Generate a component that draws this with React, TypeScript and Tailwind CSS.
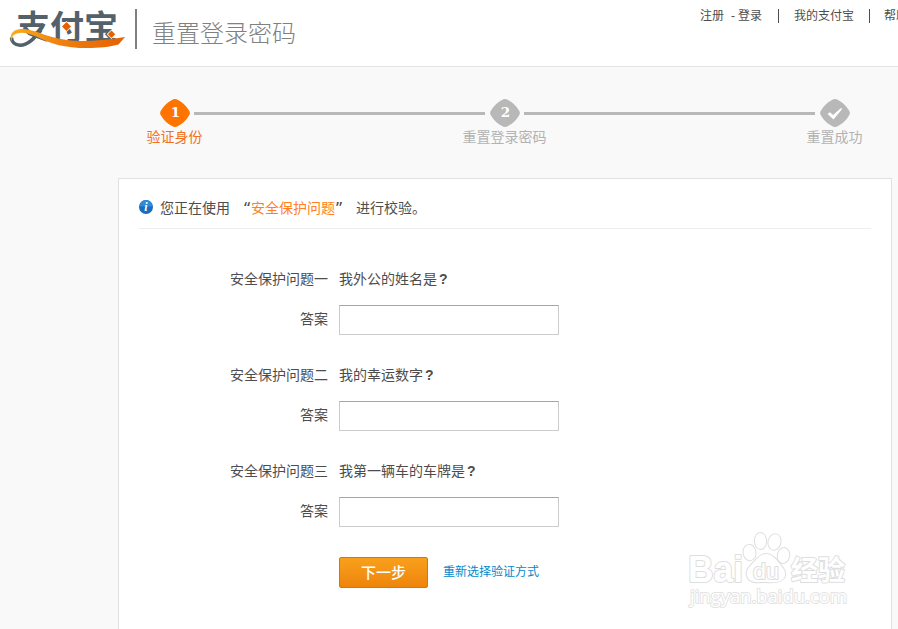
import type { ReactNode } from "react";

interface Question {
  label: string;
  text: string;
}

const questions: Question[] = [
  { label: "安全保护问题一", text: "我外公的姓名是" },
  { label: "安全保护问题二", text: "我的幸运数字" },
  { label: "安全保护问题三", text: "我第一辆车的车牌是" },
];

function Logo() {
  return (
    <svg width="118" height="44" viewBox="8 7 118 44" className="shrink-0 overflow-visible">
      <defs>
        <linearGradient id="swoosh" x1="0" x2="1">
          <stop offset="0" stopColor="#fbac1c" />
          <stop offset="0.45" stopColor="#ee8010" />
          <stop offset="1" stopColor="#e66000" />
        </linearGradient>
      </defs>
      <text
        x="16"
        y="38.500"
        textLength="102"
        lengthAdjust="spacingAndGlyphs"
        fill="#52616a"
        fontSize="33"
        fontWeight="700"
        fontFamily="'Noto Sans CJK SC', sans-serif"
      >
        支付宝
      </text>
      {/* covers the glyph feet where the ribbon passes under them */}
      <path d="M8 36L22 33C38 38 48 43 60 45L60 50L8 50Z" fill="#fff" />
      <path d="M41 30C35 37 29 45 20 45.300C14.500 45 11.500 41.500 11.500 37.500" fill="none" stroke="#52616a" strokeWidth="3.600" />
      <path
        d="M12 41.500C8.500 36 12 29.300 21 29C38 29 47 40 80 41C98 41 112 39 125 37L118.500 44.500C103 48.800 76 49.500 58 45C42 41 34 33.500 22 32.800C14 32.800 11 36.500 12 41.500Z"
        fill="url(#swoosh)"
      />
      <g fill="#e66000" stroke="#fff" strokeWidth="1.500" paintOrder="stroke">
        <path d="M66.500 22l4.500 4.500l-4.500 4.500l-4.500-4.500z" />
        <path d="M111.500 30.500l3.700 3.700l-3.700 3.700l-3.700-3.700z" />
      </g>
    </svg>
  );
}

function Step({ label, active, children }: { label: string; active?: boolean; children: ReactNode }) {
  return (
    <div className="flex w-[30px] shrink-0 flex-col items-center">
      <svg width="30" height="28" viewBox="0 0 30 28">
        <path
          d="M12 1Q15-.8 18 1Q25 4.500 29 11.500Q30.800 14 29 16.500Q25 23.500 18 27Q15 28.800 12 27Q5 23.500 1 16.500Q-.8 14 1 11.500Q5 4.500 12 1Z"
          fill={active ? "#ff7300" : "#b8b8b8"}
        />
        {children}
      </svg>
      <span
        className={`mr-px text-[14px] leading-[20px] whitespace-nowrap ${active ? "text-[#f37021]" : "text-[#b2b2b2]"}`}
      >
        {label}
      </span>
    </div>
  );
}

function StepNumber({ value }: { value: number }) {
  return (
    <text x="15.500" y="18" textAnchor="middle" fill="#fff" fontSize="13.500" fontWeight="700" fontFamily="'DejaVu Serif', serif">
      {value}
    </text>
  );
}

function StepLine() {
  return <div className="mt-[13px] mr-[5px] ml-1 h-[3px] flex-1 bg-[#b8b8b8]" />;
}

function InfoIcon() {
  return (
    <svg width="14" height="14" viewBox="0 0 14 14" className="mr-[7px] mb-0.5 shrink-0">
      <circle cx="7" cy="7" r="7" fill="#1b6dbb" />
      <path d="M0.500 6.500a6.500 6.500 0 0 1 13 0z" fill="#2f8ad8" />
      <text x="7" y="11" textAnchor="middle" fill="#fff" fontSize="12" fontWeight="700" fontStyle="italic" fontFamily="'Liberation Serif', serif">
        i
      </text>
    </svg>
  );
}

function Watermark() {
  return (
    <svg width="164" height="86" viewBox="686 530 164 86" className="absolute top-[530px] left-[686px]">
      <g fill="#fff" stroke="#dedede" strokeWidth="2" paintOrder="stroke" strokeLinejoin="round" fontFamily="'Liberation Sans', sans-serif">
        <text x="688" y="582" fontSize="37" fontWeight="700" textLength="55" lengthAdjust="spacingAndGlyphs">
          Bai
        </text>
        <ellipse cx="749.500" cy="552.500" rx="6" ry="7.700" transform="rotate(-8 749.500 552.500)" />
        <ellipse cx="760.500" cy="541" rx="5.600" ry="8" />
        <ellipse cx="774.500" cy="542" rx="6" ry="7.800" transform="rotate(12 774.500 542)" />
        <ellipse cx="783.500" cy="555.500" rx="5.700" ry="7.500" transform="rotate(12 783.500 555.500)" />
        <path d="M766 554C760 554 757 559 753 563C748 568 745 572 747.500 577C750 583 757 582.500 766 582C776 583 783 582 785 576C786 571 783 568 779 563C775 558 772 554 766 554Z" />
        <text x="753" y="578.500" fontSize="22" textLength="26" lengthAdjust="spacingAndGlyphs">
          du
        </text>
        <text x="791" y="580" fontSize="27" fontWeight="700" fontFamily="'Noto Sans CJK SC', sans-serif">
          经验
        </text>
        <text x="690" y="603" fontSize="19" fontFamily="'Open Sans', sans-serif" textLength="157" lengthAdjust="spacingAndGlyphs" stroke="#e3e3e3">
          jingyan.baidu.com
        </text>
      </g>
    </svg>
  );
}

export default function App() {
  return (
    <div className="relative h-[629px] w-[898px] overflow-hidden bg-[#f9f9f9] font-['Liberation_Sans','Noto_Sans_CJK_SC',sans-serif] text-[14px] text-[#4d4d4d]">
      <header className="flex h-[67px] items-start border-b border-[#e3e3e3] bg-white pl-2">
        <div className="flex pt-[7px]">
          <Logo />
        </div>
        <div className="mt-[9px] ml-[9px] h-10 w-[2px] bg-[#808080]" />
        <h1 className="mt-4 ml-[15px] text-[24px] leading-9 font-light whitespace-nowrap text-[#808080]">重置登录密码</h1>
        <nav className="mt-1.5 ml-auto flex h-5 w-[198px] shrink-0 items-center text-[12px] leading-5 whitespace-nowrap">
          <a>注册</a>
          <span className="mr-[3px] ml-[7px]">-</span>
          <a>登录</a>
          <span className="mr-[15px] ml-4 h-[14px] w-px shrink-0 bg-[#4d4d4d]" />
          <a>我的支付宝</a>
          <span className="mr-3.5 ml-[15px] h-[14px] w-px shrink-0 bg-[#4d4d4d]" />
          <a>帮助中心</a>
        </nav>
      </header>

      <div className="flex h-[111px] items-start pt-8 pr-[48px] pl-[160px]">
        <Step label="验证身份" active>
          <StepNumber value={1} />
        </Step>
        <StepLine />
        <Step label="重置登录密码">
          <StepNumber value={2} />
        </Step>
        <StepLine />
        <Step label="重置成功">
          <path d="M7.500 15l2.500-1.700l3 2.700l8-7l1.200 1l-8.700 10.500z" fill="#fff" />
        </Step>
      </div>

      <main className="ml-[118px] h-[470px] w-[774px] border border-[#e1e1e1] bg-white px-5">
        <div className="flex h-[50px] items-center border-b border-[#eee] pt-[9px] whitespace-nowrap">
          <InfoIcon />
          <span>您正在使用</span>
          <span className="ml-[11px] w-[9px] text-right font-['Noto_Sans',sans-serif] text-[17px] leading-5">“</span>
          <span className="ml-px text-[#ff7f21]">安全保护问题</span>
          <span className="w-[21px] pl-px font-['Noto_Sans',sans-serif] text-[17px] leading-5">”</span>
          <span>进行校验。</span>
        </div>

        <form className="pt-10">
          {questions.map((question) => (
            <div key={question.label} className="mb-[26px]">
              <div className="flex h-5 items-center">
                <span className="w-[189px] text-right">{question.label}</span>
                <span className="ml-[11px]">{question.text}</span>
                <span className="ml-0.5 font-bold">?</span>
              </div>
              <div className="mt-4 flex h-[34px] items-start">
                <label className="w-[189px] pt-1 text-right">答案</label>
                <input
                  type="text"
                  aria-label={question.label}
                  className="ml-[11px] h-[30px] w-[220px] border border-[#ccc] border-t-[#a5a5a5] bg-white px-2"
                />
              </div>
            </div>
          ))}
          <div className="ml-[200px] flex items-center">
            <button
              type="button"
              className="h-[31px] w-[89px] rounded-[2px] border border-[#d9740b] bg-linear-to-b from-[#f8a01c] to-[#ee850b] text-[15px] leading-none font-medium text-white"
            >
              下一步
            </button>
            <a className="ml-[15px] pb-0.5 text-[12px] text-[#0088cc]">重新选择验证方式</a>
          </div>
        </form>
      </main>

      <Watermark />
    </div>
  );
}
